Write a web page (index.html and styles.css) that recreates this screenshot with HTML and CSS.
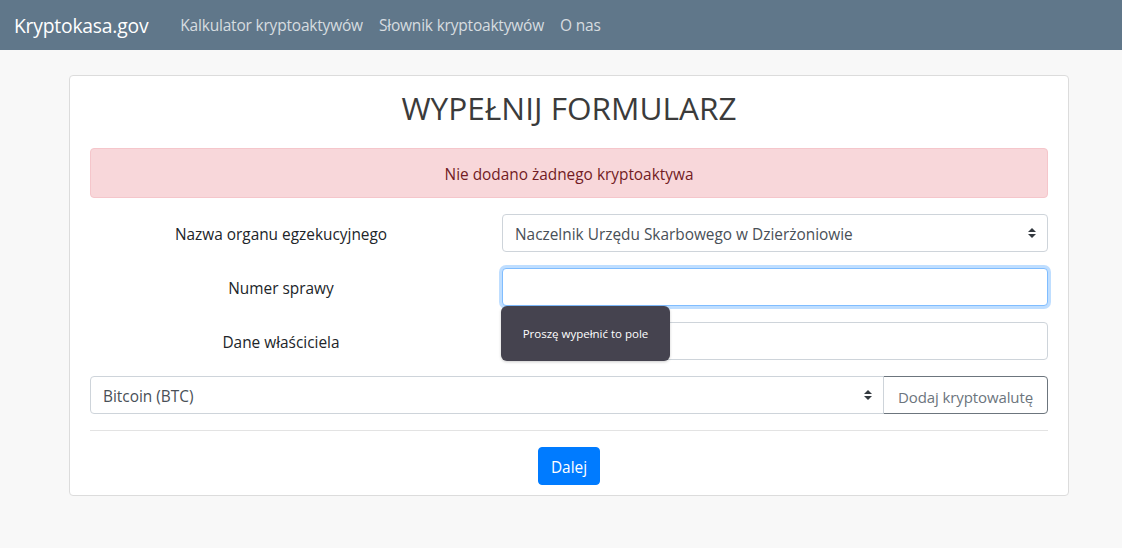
FILE: index.html
```html
<!DOCTYPE html>
<html lang="pl">
<head>
<meta charset="utf-8">
<title>Kryptokasa.gov</title>
<link rel="stylesheet" href="styles.css">
</head>
<body>
<nav class="navbar">
  <a class="brand" href="#">Kryptokasa.gov</a>
  <ul class="nav-links">
    <li><a href="#">Kalkulator kryptoaktywów</a></li>
    <li><a href="#">Słownik kryptoaktywów</a></li>
    <li><a href="#">O nas</a></li>
  </ul>
</nav>
<main class="container">
  <div class="card">
    <h1 class="title">WYPEŁNIJ FORMULARZ</h1>
    <div class="alert">Nie dodano żadnego kryptoaktywa</div>
    <form class="form">
      <div class="row">
        <label class="label">Nazwa organu egzekucyjnego</label>
        <div class="field select-wrap">
          <div class="control select">Naczelnik Urzędu Skarbowego w Dzierżoniowie</div>
          <svg class="arrows" width="8" height="10" viewBox="0 0 4 5"><path d="M2 0L0 2h4zm0 5L0 3h4z" fill="#343a40"/></svg>
        </div>
      </div>
      <div class="row">
        <label class="label">Numer sprawy</label>
        <div class="field">
          <div class="control focused"></div>
          <div class="bubble">Proszę wypełnić to pole</div>
        </div>
      </div>
      <div class="row">
        <label class="label">Dane właściciela</label>
        <div class="field">
          <div class="control"></div>
        </div>
      </div>
      <div class="input-group">
        <div class="select-wrap grow">
          <div class="control select joined">Bitcoin (BTC)</div>
          <svg class="arrows" width="8" height="10" viewBox="0 0 4 5"><path d="M2 0L0 2h4zm0 5L0 3h4z" fill="#343a40"/></svg>
        </div>
        <button type="button" class="btn-outline">Dodaj kryptowalutę</button>
      </div>
      <hr class="divider">
      <div class="actions">
        <button type="button" class="btn-primary">Dalej</button>
      </div>
    </form>
  </div>
</main>
</body>
</html>
```

FILE: styles.css
```css
* { box-sizing: border-box; }
html, body { margin: 0; padding: 0; }
body {
  font-family: "Open Sans", "Noto Sans", sans-serif;
  font-size: 15.4px;
  line-height: 1.5;
  color: #212529;
  background: #f8f8f8;
  height: 548px;
  overflow: hidden;
}
.navbar {
  height: 50px;
  background: #60778a;
  display: flex;
  align-items: center;
  padding: 2px 16px 0 14px;
}
.brand {
  color: #fff;
  text-decoration: none;
  font-size: 19.3px;
  margin-right: 24px;
  letter-spacing: -0.2px;
}
.nav-links {
  list-style: none;
  display: flex;
  margin: 0;
  padding: 0;
}
.nav-links a {
  color: rgba(255,255,255,0.75);
  text-decoration: none;
  font-size: 15.5px;
  padding: 0 8px;
  letter-spacing: -0.2px;
}
.container {
  width: 1000px;
  margin: 25px 0 0 69px;
}
.card {
  background: #fff;
  border: 1px solid #dcdcdc;
  border-radius: 4px;
  padding: 10px 20px 10px;
}
.title {
  margin: 0 0 18px;
  text-align: center;
  font-weight: 400;
  font-size: 31.6px;
  line-height: 44px;
  color: #3b3b3b;
}
.alert {
  background: #f8d7da;
  border: 1px solid #f5c6cb;
  color: #721c24;
  border-radius: 4px;
  padding: 14px 20px 10px;
  text-align: center;
  margin-bottom: 16px;
  height: 50px;
}
.row {
  display: flex;
  align-items: center;
  margin-bottom: 16px;
}
.label {
  width: 382px;
  margin-right: 30px;
  text-align: center;
  padding-top: 4px;
}
.field {
  flex: 1;
  position: relative;
}
.control {
  height: 38px;
  border: 1px solid #ced4da;
  border-radius: 4px;
  padding: 8px 12px 4px;
  color: #495057;
  background: #fff;
  line-height: 24px;
}
.control.focused {
  border-color: #80bdff;
  box-shadow: 0 0 0 3px rgba(0,123,255,0.25);
}
.select-wrap { position: relative; }
.arrows {
  position: absolute;
  right: 12px;
  top: 14px;
}
.bubble {
  position: absolute;
  left: -1px;
  top: 38px;
  width: 169px;
  height: 55px;
  background: #45434f;
  color: #fff;
  font-size: 11.5px;
  border-radius: 6px;
  display: flex;
  align-items: center;
  justify-content: center;
  box-shadow: 0 1px 3px rgba(0,0,0,0.2);
  z-index: 2;
}
.input-group {
  display: flex;
}
.grow { flex: 1; }
.control.joined {
  border-radius: 4px 0 0 4px;
}
.btn-outline {
  height: 38px;
  border: 1px solid #6c757d;
  border-radius: 0 4px 4px 0;
  background: #fff;
  color: #6c757d;
  font-family: inherit;
  font-size: 15px;
  letter-spacing: -0.1px;
  padding: 3px 4px 0;
  margin-left: -1px;
  width: 165px;
  white-space: nowrap;
}
.divider {
  border: 0;
  border-top: 1px solid #e3e3e3;
  margin: 16px 0;
}
.actions {
  display: flex;
  justify-content: center;
}
.btn-primary {
  height: 38px;
  background: #007bff;
  border: 1px solid #007bff;
  color: #fff;
  border-radius: 4px;
  font-family: inherit;
  font-size: 15.4px;
  padding: 3px 6px 0;
  width: 62px;
}
```
